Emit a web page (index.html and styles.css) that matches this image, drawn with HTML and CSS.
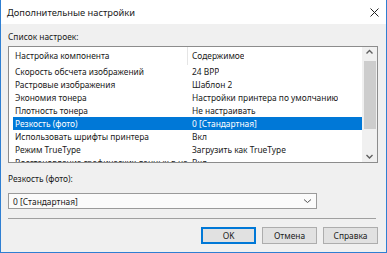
FILE: index.html
```html
<!DOCTYPE html>
<html lang="ru">

<head>
    <meta charset="UTF-8">
    <title>Дополнительные настройки</title>
    <link rel="stylesheet" href="styles.css">
</head>

<body>
    <div class="window">
        <div class="titlebar">
            <span class="title">Дополнительные настройки</span>
            <svg class="close" width="9" height="9" viewBox="0 0 9 9">
                <path d="M0.5 0.5 L8.5 8.5 M8.5 0.5 L0.5 8.5" stroke="#222" stroke-width="1" fill="none" />
            </svg>
        </div>

        <div class="content">
            <div class="label">Список настроек:</div>

            <div class="listbox">
                <div class="list">
                    <div class="list-head">
                        <span class="col-name">Настройка компонента</span>
                        <span class="col-value">Содержимое</span>
                    </div>
                    <div class="row"><span class="col-name">Скорость обсчета изображений</span><span class="col-value">24 BPP</span></div>
                    <div class="row"><span class="col-name">Растровые изображения</span><span class="col-value">Шаблон 2</span></div>
                    <div class="row"><span class="col-name">Экономия тонера</span><span class="col-value">Настройки принтера по умолчанию</span></div>
                    <div class="row"><span class="col-name">Плотность тонера</span><span class="col-value">Не настраивать</span></div>
                    <div class="row selected"><span class="col-name">Резкость (фото)</span><span class="col-value">0 [Стандартная]</span></div>
                    <div class="row"><span class="col-name">Использовать шрифты принтера</span><span class="col-value">Вкл</span></div>
                    <div class="row"><span class="col-name">Режим TrueType</span><span class="col-value">Загрузить как TrueType</span></div>
                    <div class="row"><span class="col-name">Восстановление графических данных в негативе</span><span class="col-value">Вкл</span></div>
                </div>
                <div class="scrollbar">
                    <svg class="arrow" width="15" height="11" viewBox="0 0 15 11">
                        <path d="M4.5 6.5 L7.5 3.5 L10.5 6.5" stroke="#606060" stroke-width="1.4" fill="none" />
                    </svg>
                    <div class="thumb"></div>
                    <div class="track"></div>
                    <svg class="arrow" width="15" height="11" viewBox="0 0 15 11">
                        <path d="M4.5 4 L7.5 7 L10.5 4" stroke="#606060" stroke-width="1.4" fill="none" />
                    </svg>
                </div>
            </div>

            <div class="label label-gap">Резкость (фото):</div>

            <div class="combo">
                <span>0 [Стандартная]</span>
                <svg width="9" height="6" viewBox="0 0 9 6">
                    <path d="M1 1.5 L4.5 4.5 L8 1.5" stroke="#555" stroke-width="1" fill="none" />
                </svg>
            </div>

            <div class="separator"></div>

            <div class="buttons">
                <button class="btn btn-default">OK</button>
                <button class="btn">Отмена</button>
                <button class="btn">Справка</button>
            </div>
        </div>
    </div>
</body>

</html>
```

FILE: styles.css
```css
body {
    margin: 0;
    font-family: "Noto Sans", "Liberation Sans", sans-serif;
    font-size: 8.4px;
    color: #1a1a1a;
}

.window {
    width: 387px;
    height: 253px;
    box-sizing: border-box;
    border: 1px solid #2f7fd2;
    border-top: none;
    background: #f0f0f0;
    display: flex;
    flex-direction: column;
}

.titlebar {
    height: 24px;
    background: #fff;
    display: flex;
    align-items: center;
    justify-content: space-between;
    padding: 0 7px 0 6px;
}

.title {
    font-size: 9.3px;
}

.content {
    padding: 7px 8px 0 7px;
}

.label {
    height: 12px;
    line-height: 12px;
}

.label-gap {
    margin-top: 10px;
}

/* list of settings */
.listbox {
    margin-top: 3px;
    height: 117px;
    box-sizing: border-box;
    border: 1px solid #8c8c8c;
    background: #fff;
    display: flex;
    overflow: hidden;
}

.list {
    flex: 1;
    padding-left: 4px;
    overflow: hidden;
}

.list-head,
.row {
    display: flex;
    white-space: nowrap;
}

.list-head {
    height: 18px;
    line-height: 18px;
}

.list-head .col-name {
    border-right: 1px solid #e5e5e5;
}

.row {
    height: 13px;
    line-height: 13px;
}

.col-name {
    width: 175px;
    flex: none;
    padding-left: 2px;
    box-sizing: border-box;
    overflow: hidden;
}

.col-value {
    padding-left: 4px;
    overflow: hidden;
}

.row.selected {
    background: #0078d7;
    color: #fff;
}

.scrollbar {
    width: 15px;
    flex: none;
    background: #f0f0f0;
    display: flex;
    flex-direction: column;
}

.arrow {
    display: block;
}

.thumb {
    height: 68px;
    margin: 3px 1px 0 2px;
    background: #cdcdcd;
}

.track {
    flex: 1;
}

/* dropdown */
.combo {
    margin-top: 8px;
    width: 309px;
    height: 16px;
    box-sizing: border-box;
    border: 1px solid #9a9a9a;
    background: #fbfbfb;
    display: flex;
    align-items: center;
    justify-content: space-between;
    padding: 0 4px 0 4px;
}

.separator {
    margin-top: 9px;
    height: 1px;
    background: #a0a0a0;
    margin-right: 2px;
}

.buttons {
    margin-top: 8px;
    display: flex;
    justify-content: flex-end;
    gap: 6px;
}

.btn {
    width: 55px;
    height: 17px;
    box-sizing: border-box;
    border: 1px solid #adadad;
    background: #e1e1e1;
    font-family: inherit;
    font-size: 8.4px;
    color: #1a1a1a;
    padding: 0;
}

.btn-default {
    border: 1px solid #0078d7;
    box-shadow: inset 0 0 0 1px #0078d7;
}
```
